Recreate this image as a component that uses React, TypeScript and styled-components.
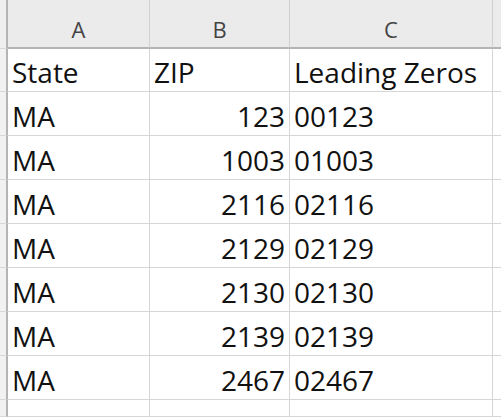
import React from 'react';
import styled, { createGlobalStyle } from 'styled-components';

const Global = createGlobalStyle`
  html, body { margin: 0; padding: 0; background: #ffffff; }
  body { font-family: "Open Sans", Lato, sans-serif; }
`;

const Sheet = styled.div`
  display: grid;
  grid-template-columns: 8px 142px 140px 203px 1fr;
  grid-template-rows: 49px 43px repeat(7, 44px) 1fr;
  width: 501px;
  height: 417px;
  overflow: hidden;
  background: #ffffff;
`;

const Corner = styled.div`
  box-sizing: border-box;
  background: #efefef;
  border-right: 2px solid #b4b4b4;
  border-bottom: 1px solid #d8d8d8;
`;

const ColHeader = styled.div`
  box-sizing: border-box;
  background: #ebebeb;
  border-right: 1px solid #d0d0d0;
  border-bottom: 2px solid #b4b4b4;
  display: flex;
  align-items: flex-end;
  justify-content: center;
  padding-bottom: 7px;
  color: #444444;
  font-size: 22px;
  line-height: 1;
`;

const RowHeader = styled.div`
  box-sizing: border-box;
  background: #f1f1f1;
  border-right: 2px solid #b4b4b4;
  border-bottom: 1px solid #d8d8d8;
`;

const Cell = styled.div<{ $align?: 'left' | 'right' }>`
  box-sizing: border-box;
  border-right: 1px solid #d6d6d6;
  border-bottom: 1px solid #d6d6d6;
  display: flex;
  align-items: flex-end;
  justify-content: ${(p) => (p.$align === 'right' ? 'flex-end' : 'flex-start')};
  padding: 0 4px 5px 4px;
  color: #111111;
  font-size: 28px;
  line-height: 1;
  white-space: nowrap;
  overflow: hidden;
`;

const rows: [string, string, string][] = [
  ['MA', '123', '00123'],
  ['MA', '1003', '01003'],
  ['MA', '2116', '02116'],
  ['MA', '2129', '02129'],
  ['MA', '2130', '02130'],
  ['MA', '2139', '02139'],
  ['MA', '2467', '02467'],
];

export default function App() {
  return (
    <>
      <Global />
      <Sheet>
        <Corner />
        <ColHeader>A</ColHeader>
        <ColHeader>B</ColHeader>
        <ColHeader>C</ColHeader>
        <ColHeader />

        <RowHeader />
        <Cell>State</Cell>
        <Cell>ZIP</Cell>
        <Cell>Leading Zeros</Cell>
        <Cell />

        {rows.map((r, i) => (
          <React.Fragment key={i}>
            <RowHeader />
            <Cell>{r[0]}</Cell>
            <Cell $align="right">{r[1]}</Cell>
            <Cell>{r[2]}</Cell>
            <Cell />
          </React.Fragment>
        ))}

        <RowHeader />
        <Cell />
        <Cell />
        <Cell />
        <Cell />
      </Sheet>
    </>
  );
}
